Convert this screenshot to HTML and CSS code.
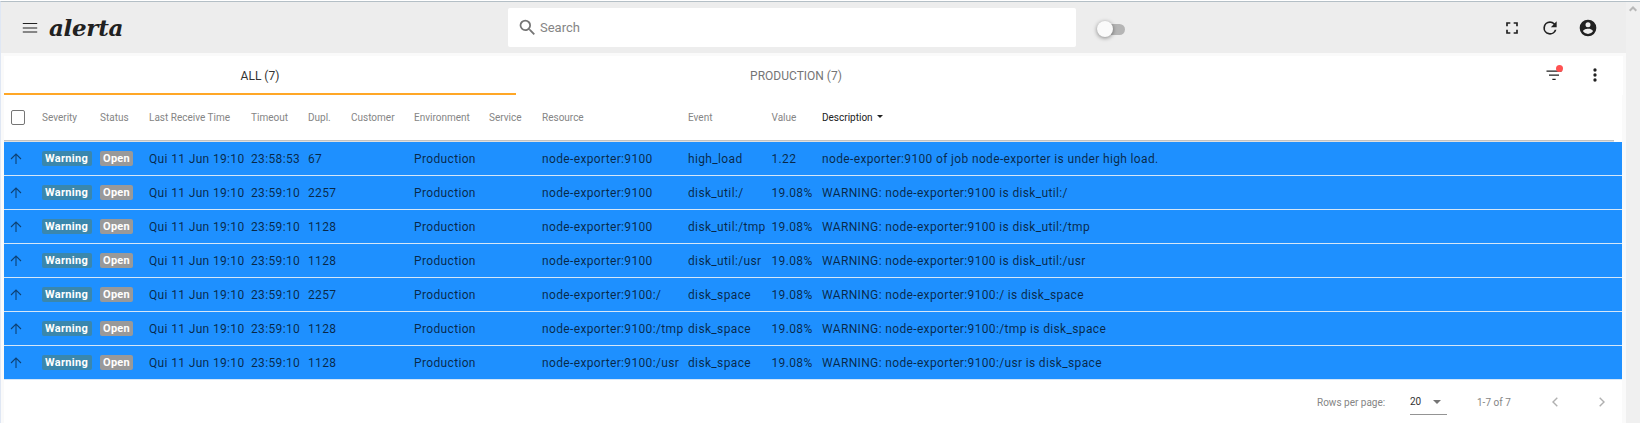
FILE: index.html
```
<!DOCTYPE html>
<html lang="en">
<head>
<meta charset="utf-8">
<title>alerta</title>
<link rel="stylesheet" href="styles.css">
</head>
<body>
<div class="window">
  <div class="app">
    <header class="toolbar">
      <svg class="menu" width="24" height="24" viewBox="0 0 24 24"><path d="M4.800 7.500h14.400M4.800 12h14.400M4.800 16h14.400" stroke="#212121" stroke-width="1.200"/></svg>
      <span class="logo">alerta</span>
      <div class="search">
        <svg width="21" height="21" viewBox="0 0 24 24"><path fill="#757575" d="M15.500 14h-.79l-.28-.27A6.470 6.470 0 0 0 16 9.500 6.500 6.500 0 1 0 9.500 16c1.610 0 3.090-.59 4.230-1.570l.27.28v.79l5 4.990L20.490 19l-4.990-5zm-6 0C7.010 14 5 11.990 5 9.500S7.010 5 9.500 5 14 7.010 14 9.500 11.990 14 9.500 14z"/></svg>
        <span>Search</span>
      </div>
      <div class="switch"><i class="thumb"></i></div>
      <div class="actions">
        <svg width="20" height="20" viewBox="0 0 24 24"><path fill="#212121" d="M7 14H5v5h5v-2H7v-3zm-2-4h2V7h3V5H5v5zm12 7h-3v2h5v-5h-2v3zM14 5v2h3v3h2V5h-5z"/></svg>
        <svg width="20" height="20" viewBox="0 0 24 24"><path fill="#212121" d="M17.650 6.350A7.958 7.958 0 0 0 12 4a8 8 0 1 0 7.730 10h-2.080A6 6 0 1 1 12 6c1.660 0 3.140.69 4.220 1.780L13 11h7V4l-2.350 2.350z"/></svg>
        <svg width="20" height="20" viewBox="0 0 24 24"><path fill="#212121" d="M12 2a10 10 0 1 0 0 20 10 10 0 0 0 0-20zm0 3a3 3 0 1 1 0 6 3 3 0 0 1 0-6zm0 14.200a7.200 7.200 0 0 1-6-3.220c.03-1.990 4-3.080 6-3.080 1.990 0 5.970 1.090 6 3.080a7.200 7.200 0 0 1-6 3.220z"/></svg>
      </div>
    </header>
    <nav class="tabs">
      <div class="tab active">ALL (7)</div>
      <div class="tab">PRODUCTION (7)</div>
      <div class="tools">
        <div class="filter">
          <svg width="20" height="20" viewBox="0 0 24 24"><path fill="#212121" d="M10 18h4v-1.500h-4V18zM3 6.500V8h18V6.500H3zM6 13h12v-1.500H6V13z"/></svg>
          <i class="dot"></i>
        </div>
        <svg width="20" height="20" viewBox="0 0 24 24"><path fill="#212121" d="M12 8a2 2 0 1 0 0-4 2 2 0 0 0 0 4zm0 2a2 2 0 1 0 0 4 2 2 0 0 0 0-4zm0 6a2 2 0 1 0 0 4 2 2 0 0 0 0-4z"/></svg>
      </div>
    </nav>
    <main class="table">
      <div class="row head">
        <span class="check"></span><span>Severity</span><span>Status</span><span>Last Receive Time</span><span>Timeout</span><span>Dupl.</span><span>Customer</span><span>Environment</span><span>Service</span><span>Resource</span><span>Event</span><span>Value</span>
        <span class="sorted">Description <i class="caret"></i></span>
      </div>
      <div class="rule"></div>
      <div class="row"><svg class="up" viewBox="0 0 12 12"><path d="M6 11V1.500M1 6l5-5 5 5"/></svg><span><b class="label warning">Warning</b></span><span><b class="label open">Open</b></span><span class="time">Qui 11 Jun 19:10</span><span class="num">23:58:53</span><span class="num">67</span><span></span><span>Production</span><span></span><span>node-exporter:9100</span><span>high_load</span><span class="value">1.22</span><span>node-exporter:9100 of job node-exporter is under high load.</span></div>
      <div class="row"><svg class="up" viewBox="0 0 12 12"><path d="M6 11V1.500M1 6l5-5 5 5"/></svg><span><b class="label warning">Warning</b></span><span><b class="label open">Open</b></span><span class="time">Qui 11 Jun 19:10</span><span class="num">23:59:10</span><span class="num">2257</span><span></span><span>Production</span><span></span><span>node-exporter:9100</span><span>disk_util:/</span><span class="value">19.08%</span><span>WARNING: node-exporter:9100 is disk_util:/</span></div>
      <div class="row"><svg class="up" viewBox="0 0 12 12"><path d="M6 11V1.500M1 6l5-5 5 5"/></svg><span><b class="label warning">Warning</b></span><span><b class="label open">Open</b></span><span class="time">Qui 11 Jun 19:10</span><span class="num">23:59:10</span><span class="num">1128</span><span></span><span>Production</span><span></span><span>node-exporter:9100</span><span>disk_util:/tmp</span><span class="value">19.08%</span><span>WARNING: node-exporter:9100 is disk_util:/tmp</span></div>
      <div class="row"><svg class="up" viewBox="0 0 12 12"><path d="M6 11V1.500M1 6l5-5 5 5"/></svg><span><b class="label warning">Warning</b></span><span><b class="label open">Open</b></span><span class="time">Qui 11 Jun 19:10</span><span class="num">23:59:10</span><span class="num">1128</span><span></span><span>Production</span><span></span><span>node-exporter:9100</span><span>disk_util:/usr</span><span class="value">19.08%</span><span>WARNING: node-exporter:9100 is disk_util:/usr</span></div>
      <div class="row"><svg class="up" viewBox="0 0 12 12"><path d="M6 11V1.500M1 6l5-5 5 5"/></svg><span><b class="label warning">Warning</b></span><span><b class="label open">Open</b></span><span class="time">Qui 11 Jun 19:10</span><span class="num">23:59:10</span><span class="num">2257</span><span></span><span>Production</span><span></span><span>node-exporter:9100:/</span><span>disk_space</span><span class="value">19.08%</span><span>WARNING: node-exporter:9100:/ is disk_space</span></div>
      <div class="row"><svg class="up" viewBox="0 0 12 12"><path d="M6 11V1.500M1 6l5-5 5 5"/></svg><span><b class="label warning">Warning</b></span><span><b class="label open">Open</b></span><span class="time">Qui 11 Jun 19:10</span><span class="num">23:59:10</span><span class="num">1128</span><span></span><span>Production</span><span></span><span>node-exporter:9100:/tmp</span><span>disk_space</span><span class="value">19.08%</span><span>WARNING: node-exporter:9100:/tmp is disk_space</span></div>
      <div class="row"><svg class="up" viewBox="0 0 12 12"><path d="M6 11V1.500M1 6l5-5 5 5"/></svg><span><b class="label warning">Warning</b></span><span><b class="label open">Open</b></span><span class="time">Qui 11 Jun 19:10</span><span class="num">23:59:10</span><span class="num">1128</span><span></span><span>Production</span><span></span><span>node-exporter:9100:/usr</span><span>disk_space</span><span class="value">19.08%</span><span>WARNING: node-exporter:9100:/usr is disk_space</span></div>
      <footer class="pager">
        <span class="rpp">Rows per page:</span>
        <span class="select">20<i class="arrow"></i></span>
        <span class="range">1-7 of 7</span>
        <svg class="prev" width="6" height="10" viewBox="0 0 6 10"><path d="M5.300.7 1 5l4.300 4.300"/></svg>
        <svg width="6" height="10" viewBox="0 0 6 10"><path d="M.7.7 5 5 .7 9.300"/></svg>
      </footer>
    </main>
  </div>
  <aside class="scrollbar"><svg width="8" height="6" viewBox="0 0 8 6"><path d="M.7 4.800 4 1.500l3.300 3.300" fill="none" stroke="#b8b8b8" stroke-width="2"/></svg></aside>
</div>
</body>
</html>
```

FILE: styles.css
```
* { box-sizing: border-box; }
body { margin: 0; height: 423px; overflow: hidden; background: #fff; font-family: Roboto, "Liberation Sans", sans-serif; }
svg { display: block; flex: none; }

.window { height: 422px; margin-top: 1px; border-top: 1px solid #b4bfc6; border-left: 1px solid #dfe7f4; display: flex; }
.app { width: 1625px; background: #fafafa; }
.scrollbar { flex: 1; background: #f0f0f0; padding: 4px 0 0 3px; }

.toolbar { height: 51px; background: #ededed; display: flex; align-items: center; }
.menu { margin-left: 17px; }
.logo { width: 92px; margin-left: 7px; font: italic bold 23px/30px "DejaVu Serif", serif; color: #212121; letter-spacing: -0.3px; }
.search { width: 568px; height: 39px; margin-left: 367px; border-radius: 2px; background: #fff; display: flex; align-items: center; padding-left: 9px; gap: 2px; font-size: 13px; color: #858585; }
.switch { position: relative; width: 24px; height: 11px; margin: 3px 0 0 25px; border-radius: 6px; background: #b5b5b5; }
.thumb { position: absolute; left: -4px; top: -3px; width: 16px; height: 16px; border-radius: 50%; background: #fafafa; box-shadow: 0 1px 4px rgba(0, 0, 0, .45); }
.actions { margin-left: auto; padding-right: 28px; display: flex; gap: 18px; }

.tabs { height: 39px; width: 1619px; margin: 3px 0 0 3px; background: #fff; display: flex; font-size: 12px; color: #757575; }
.tab { width: 512px; height: 39px; line-height: 40px; text-align: center; flex: none; }
.tab:nth-child(2) { width: 560px; }
.active { color: #333; border-bottom: 2px solid #ffa726; }
.tools { margin-left: auto; padding: 9px 18px 0 0; display: flex; gap: 21px; }
.filter { position: relative; }
.dot { position: absolute; right: 1px; top: 0; width: 7px; height: 7px; border-radius: 50%; background: #ff5252; }

.table { width: 1618px; height: 329px; margin-left: 3px; background: #fff; }
.row { display: grid; grid-template-columns: 38px 58px 49px 102px 57px 43px 63px 75px 53px 146px 83.500px 50.500px 1fr; height: 34px; align-items: center; background: #1e90ff; border-bottom: 1px solid #d5e7f8; font-size: 12px; letter-spacing: .35px; color: rgba(0, 0, 0, .73); white-space: nowrap; }
.head { height: 45px; background: #fff; border: 0; font-size: 10px; letter-spacing: 0; color: #858585; }
.rule { height: 2px; margin-right: 8px; background: #c2c2c2; border-bottom: 1px solid #dfdfdf; }
.check { width: 14px; height: 15px; margin-left: 7px; border: 1.500px solid #757575; border-radius: 2px; }
.sorted { color: #212121; display: flex; align-items: center; }
.caret { margin: -3px 0 0 4px; border: 3px solid transparent; border-top-color: #212121; border-bottom: 0; }
.up { width: 12px; height: 12px; margin-left: 6px; fill: none; stroke: rgba(0, 0, 0, .55); stroke-width: 1.100; }
.label { display: inline-block; height: 15px; line-height: 15px; border-radius: 2px; padding: 0 3px; font-size: 11px; letter-spacing: .3px; color: #fff; vertical-align: middle; }
.warning { width: 50px; background: #3a87ad; }
.open { width: 33px; background: #999; }

.pager { height: 44px; display: flex; align-items: center; font-size: 10px; color: #858585; }
.rpp { margin-left: 1313px; width: 93px; }
.select { width: 37px; height: 26px; line-height: 25px; border-bottom: 1px solid #949494; display: flex; align-items: center; color: #333; }
.arrow { margin-left: 12px; border: 4px solid transparent; border-top-color: #757575; border-bottom: 0; }
.range { margin-left: 30px; width: 75px; }
.pager svg { fill: none; stroke: #b0b0b0; stroke-width: 1.400; }
.prev { margin-right: 41px; }
```
